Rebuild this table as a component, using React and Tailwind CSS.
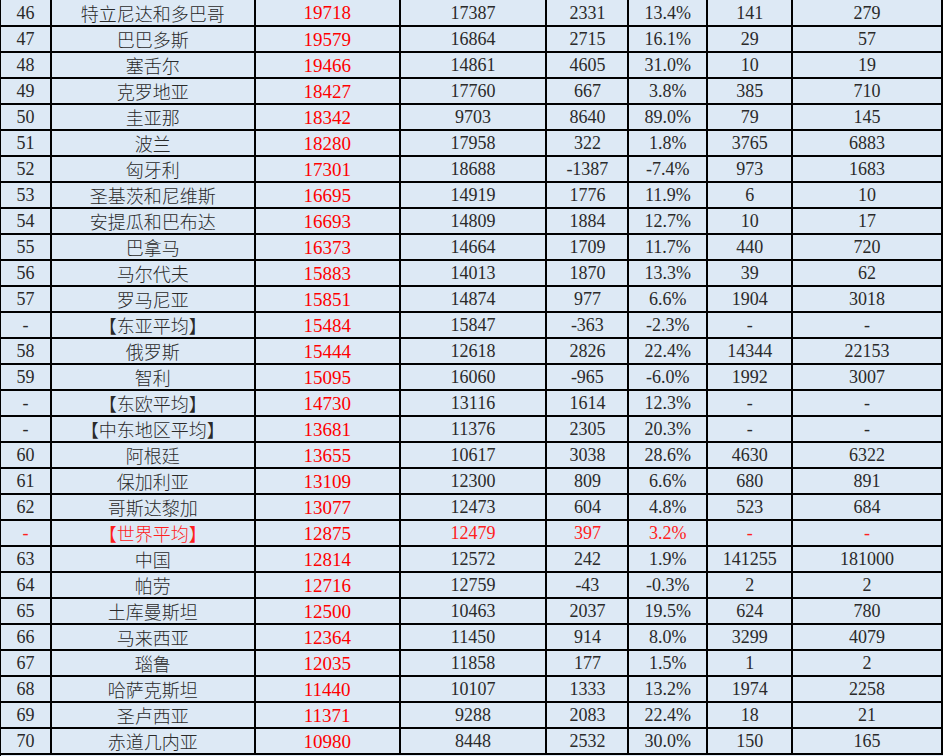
import React from "react";

// rank, name, col3 (red), col4, diff, pct, col7, col8, highlight
const rows = [
  ["46", "特立尼达和多巴哥", "19718", "17387", "2331", "13.4%", "141", "279"],
  ["47", "巴巴多斯", "19579", "16864", "2715", "16.1%", "29", "57"],
  ["48", "塞舌尔", "19466", "14861", "4605", "31.0%", "10", "19"],
  ["49", "克罗地亚", "18427", "17760", "667", "3.8%", "385", "710"],
  ["50", "圭亚那", "18342", "9703", "8640", "89.0%", "79", "145"],
  ["51", "波兰", "18280", "17958", "322", "1.8%", "3765", "6883"],
  ["52", "匈牙利", "17301", "18688", "-1387", "-7.4%", "973", "1683"],
  ["53", "圣基茨和尼维斯", "16695", "14919", "1776", "11.9%", "6", "10"],
  ["54", "安提瓜和巴布达", "16693", "14809", "1884", "12.7%", "10", "17"],
  ["55", "巴拿马", "16373", "14664", "1709", "11.7%", "440", "720"],
  ["56", "马尔代夫", "15883", "14013", "1870", "13.3%", "39", "62"],
  ["57", "罗马尼亚", "15851", "14874", "977", "6.6%", "1904", "3018"],
  ["-", "【东亚平均】", "15484", "15847", "-363", "-2.3%", "-", "-"],
  ["58", "俄罗斯", "15444", "12618", "2826", "22.4%", "14344", "22153"],
  ["59", "智利", "15095", "16060", "-965", "-6.0%", "1992", "3007"],
  ["-", "【东欧平均】", "14730", "13116", "1614", "12.3%", "-", "-"],
  ["-", "【中东地区平均】", "13681", "11376", "2305", "20.3%", "-", "-"],
  ["60", "阿根廷", "13655", "10617", "3038", "28.6%", "4630", "6322"],
  ["61", "保加利亚", "13109", "12300", "809", "6.6%", "680", "891"],
  ["62", "哥斯达黎加", "13077", "12473", "604", "4.8%", "523", "684"],
  ["-", "【世界平均】", "12875", "12479", "397", "3.2%", "-", "-", true],
  ["63", "中国", "12814", "12572", "242", "1.9%", "141255", "181000"],
  ["64", "帕劳", "12716", "12759", "-43", "-0.3%", "2", "2"],
  ["65", "土库曼斯坦", "12500", "10463", "2037", "19.5%", "624", "780"],
  ["66", "马来西亚", "12364", "11450", "914", "8.0%", "3299", "4079"],
  ["67", "瑙鲁", "12035", "11858", "177", "1.5%", "1", "2"],
  ["68", "哈萨克斯坦", "11440", "10107", "1333", "13.2%", "1974", "2258"],
  ["69", "圣卢西亚", "11371", "9288", "2083", "22.4%", "18", "21"],
  ["70", "赤道几内亚", "10980", "8448", "2532", "30.0%", "150", "165"],
];

const cell = "flex items-center justify-center border-r-2 border-black";

function Row({ r, first }) {
  const hl = r[8];
  const txt = hl ? "text-[#ff2020]" : "text-[#2a2a2a]";
  return (
    <div
      className={`flex border-b-2 border-black ${first ? "h-[27px]" : "h-[26px]"}`}
    >
      <div className={`${cell} w-[51px] ${txt}`}>{r[0]}</div>
      <div className={`${cell} w-[204px] ${txt} font-['Noto_Sans_CJK_SC',sans-serif] text-[18px] font-light`}>
        {r[1]}
      </div>
      <div className={`${cell} w-[145px] text-[#ff0000] text-[19px] font-['Liberation_Serif',serif]`}>
        {r[2]}
      </div>
      <div className={`${cell} w-[147px] ${txt}`}>{r[3]}</div>
      <div className={`${cell} w-[82px] ${txt}`}>{r[4]}</div>
      <div className={`${cell} w-[79px] ${txt}`}>{r[5]}</div>
      <div className={`${cell} w-[85px] ${txt}`}>{r[6]}</div>
      <div className={`${cell} w-[150px] ${txt}`}>{r[7]}</div>
    </div>
  );
}

export default function App() {
  return (
    <div className="w-[943px] h-[756px] overflow-hidden bg-[#dde9f5] border-l border-black font-['Liberation_Serif',serif] text-[18px] leading-none">
      {rows.map((r, i) => (
        <Row key={i} r={r} first={i === 0} />
      ))}
    </div>
  );
}
